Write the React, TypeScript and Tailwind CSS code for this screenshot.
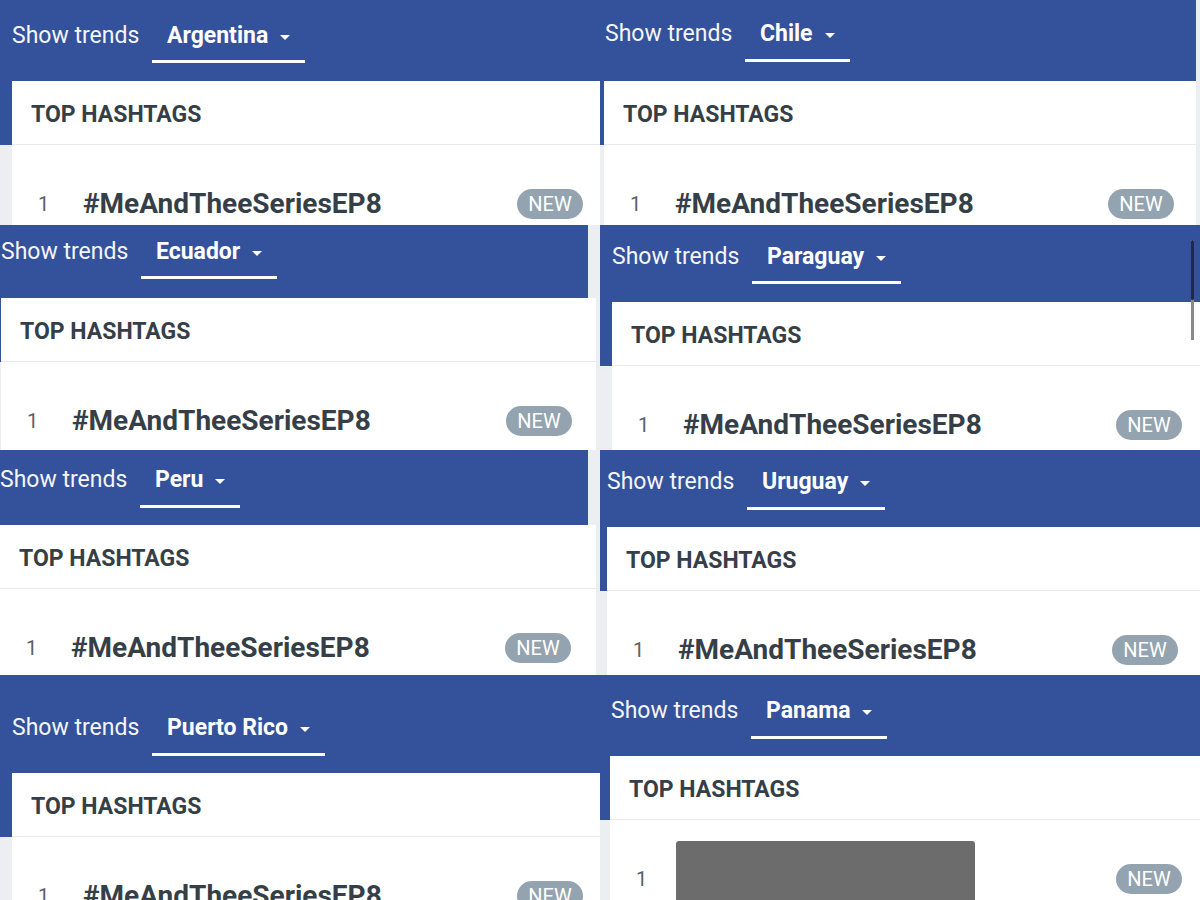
import React from "react";

type Tile = {
  country: string;
  header: string;
  textPl: string;
  btnPb: string;
  card: string;
  rowPr: string;
  band: string;
  redacted?: boolean;
  scroll?: boolean;
};

const tiles: Tile[] = [
  { country: "Argentina", header: "h-[81px] pt-[22px] w-[600px]", textPl: "pl-[12px]", btnPb: "pb-[10px]", card: "ml-[12px] w-[588px]", rowPr: "pr-[17px]", band: "w-[600px]" },
  { country: "Chile", header: "h-[81px] pt-[20px] w-[596px]", textPl: "pl-[5px]", btnPb: "pb-[11px]", card: "ml-[4px] w-[592px]", rowPr: "pr-[22px]", band: "w-[596px]" },
  { country: "Ecuador", header: "h-[73px] pt-[13px] w-[588px]", textPl: "pl-[1px]", btnPb: "pb-[10px]", card: "ml-[1px] w-[595px]", rowPr: "pr-[24px]", band: "w-[588px]" },
  { country: "Paraguay", header: "h-[77px] pt-[18px] w-[600px]", textPl: "pl-[12px]", btnPb: "pb-[10px]", card: "ml-[12px] w-[588px]", rowPr: "pr-[18px]", band: "w-[600px]", scroll: true },
  { country: "Peru", header: "h-[75px] pt-[16px] w-[588px]", textPl: "pl-[0px]", btnPb: "pb-[11px]", card: "ml-[0px] w-[596px]", rowPr: "pr-[25px]", band: "w-[588px]" },
  { country: "Uruguay", header: "h-[77px] pt-[18px] w-[600px]", textPl: "pl-[7px]", btnPb: "pb-[11px]", card: "ml-[7px] w-[593px]", rowPr: "pr-[22px]", band: "w-[600px]" },
  { country: "Puerto Rico", header: "h-[98px] pt-[39px] w-[600px]", textPl: "pl-[12px]", btnPb: "pb-[11px]", card: "ml-[12px] w-[588px]", rowPr: "pr-[17px]", band: "w-[600px]" },
  { country: "Panama", header: "h-[81px] pt-[22px] w-[600px]", textPl: "pl-[11px]", btnPb: "pb-[11px]", card: "ml-[10px] w-[590px]", rowPr: "pr-[18px]", band: "w-[600px]", redacted: true },
];

function Caret() {
  return (
    <svg width="10" height="5" viewBox="0 0 10 5" className="mt-[2px]">
      <path d="M0 0 L10 0 L5 5 Z" fill="#ffffff" />
    </svg>
  );
}

function TrendTile({ t }: { t: Tile }) {
  return (
    <div className="relative h-[225px] overflow-hidden bg-[#eceef1]">
      <div className={`bg-[#34519b] ${t.header} ${t.textPl}`}>
        <div className="flex items-start">
          <span className="w-[140px] shrink-0 text-[23px] leading-[28px] text-[#f4f5f8]">Show trends</span>
          <div className={`flex items-center gap-[12px] px-[15px] border-b-[3px] border-white ${t.btnPb}`}>
            <span className="text-[23px] leading-[28px] font-bold text-white">{t.country}</span>
            <Caret />
          </div>
        </div>
      </div>
      <div className={`bg-[linear-gradient(#34519b_64px,transparent_64px)] ${t.band}`}>
        <div className={`bg-white ${t.card}`}>
          <div className="h-[64px] flex items-center pl-[19px] pt-[6px] border-b border-[#e7e9ec] text-[23px] font-bold text-[#363f47]">
            TOP HASHTAGS
          </div>
          <div className={`h-[118px] flex items-center pl-[26px] ${t.rowPr}`}>
            <span className="w-[45px] shrink-0 text-[20px] text-[#5b6168]">1</span>
            {t.redacted ? (
              <div className="-ml-[5px] w-[299px] h-[76px] rounded-t-[3px] bg-[#6c6c6c]" />
            ) : (
              <span className="text-[28px] font-bold text-[#363f47]">#MeAndTheeSeriesEP8</span>
            )}
            <span className="ml-auto h-[30px] w-[66px] rounded-full bg-[#93a3b0] text-white text-[20px] flex items-center justify-center">
              NEW
            </span>
          </div>
        </div>
      </div>
      {t.scroll && (
        <div className="absolute right-[6px] top-[15px] w-[3px] h-[100px] bg-[#8a8a8a]">
          <div className="w-[3px] h-[60px] bg-[#1f2a44] rounded-full" />
        </div>
      )}
    </div>
  );
}

export default function App() {
  return (
    <div className="w-[1200px] h-[900px] overflow-hidden bg-[#eceef1] grid grid-cols-2 [font-family:Roboto,'Noto_Sans',sans-serif]">
      {tiles.map((t) => (
        <TrendTile key={t.country} t={t} />
      ))}
    </div>
  );
}
